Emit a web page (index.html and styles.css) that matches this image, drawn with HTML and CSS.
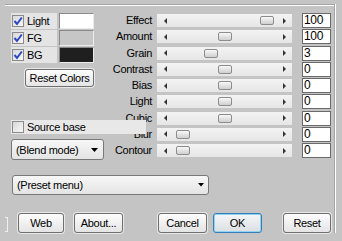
FILE: index.html
```html
<!DOCTYPE html>
<html lang="en">
<head>
    <meta charset="UTF-8">
    <title>Filter Settings</title>
    <link rel="stylesheet" href="styles.css">
</head>
<body>
    <div class="panel">
        <div class="main">
            <div class="left">
                <div class="color-row">
                    <label class="check-band"><span class="check"><svg width="10" height="10" viewBox="0 0 10 10"><path d="M1.5 5 L4 8 L8.8 1.5" fill="none" stroke="#2c47c4" stroke-width="2"/></svg></span>Light</label>
                    <span class="swatch swatch-light"></span>
                </div>
                <div class="color-row">
                    <label class="check-band"><span class="check"><svg width="10" height="10" viewBox="0 0 10 10"><path d="M1.5 5 L4 8 L8.8 1.5" fill="none" stroke="#2c47c4" stroke-width="2"/></svg></span>FG</label>
                    <span class="swatch swatch-fg"></span>
                </div>
                <div class="color-row">
                    <label class="check-band"><span class="check"><svg width="10" height="10" viewBox="0 0 10 10"><path d="M1.5 5 L4 8 L8.8 1.5" fill="none" stroke="#2c47c4" stroke-width="2"/></svg></span>BG</label>
                    <span class="swatch swatch-bg"></span>
                </div>
                <button class="btn btn-reset-colors">Reset Colors</button>
                <label class="check-band source-base"><span class="check"></span>Source base</label>
                <div class="select blend">
                    <span>(Blend mode)</span>
                    <svg width="7" height="4"><polygon points="0,0 7,0 3.5,4" fill="#000"/></svg>
                </div>
            </div>

            <div class="params">
                <span class="param-label">Effect</span>
                <div class="slider"><span class="arr-l"></span><span class="thumb" style="left:103px"></span><span class="arr-r"></span></div>
                <span class="num">100</span>

                <span class="param-label">Amount</span>
                <div class="slider"><span class="arr-l"></span><span class="thumb" style="left:61px"></span><span class="arr-r"></span></div>
                <span class="num">100</span>

                <span class="param-label">Grain</span>
                <div class="slider"><span class="arr-l"></span><span class="thumb" style="left:47px"></span><span class="arr-r"></span></div>
                <span class="num">3</span>

                <span class="param-label">Contrast</span>
                <div class="slider"><span class="arr-l"></span><span class="thumb" style="left:61px"></span><span class="arr-r"></span></div>
                <span class="num">0</span>

                <span class="param-label">Bias</span>
                <div class="slider"><span class="arr-l"></span><span class="thumb" style="left:61px"></span><span class="arr-r"></span></div>
                <span class="num">0</span>

                <span class="param-label">Light</span>
                <div class="slider"><span class="arr-l"></span><span class="thumb" style="left:61px"></span><span class="arr-r"></span></div>
                <span class="num">0</span>

                <span class="param-label">Cubic</span>
                <div class="slider"><span class="arr-l"></span><span class="thumb" style="left:61px"></span><span class="arr-r"></span></div>
                <span class="num">0</span>

                <span class="param-label">Blur</span>
                <div class="slider"><span class="arr-l"></span><span class="thumb" style="left:19px"></span><span class="arr-r"></span></div>
                <span class="num">0</span>

                <span class="param-label">Contour</span>
                <div class="slider"><span class="arr-l"></span><span class="thumb" style="left:19px"></span><span class="arr-r"></span></div>
                <span class="num">0</span>
            </div>
        </div>

        <div class="select preset">
            <span>(Preset menu)</span>
            <svg width="6" height="4"><polygon points="0,0 6,0 3,3.5" fill="#000"/></svg>
        </div>

        <div class="buttons">
            <span class="bracket"></span>
            <button class="btn btn-web">Web</button>
            <button class="btn btn-about">About...</button>
            <button class="btn btn-cancel">Cancel</button>
            <button class="btn btn-ok">OK</button>
            <button class="btn btn-reset">Reset</button>
        </div>
    </div>
</body>
</html>
```

FILE: styles.css
```css
body {
    margin: 0;
    width: 342px;
    height: 241px;
    overflow: hidden;
    background-color: #c4c4c4;
    font-family: "Liberation Sans", Arial, sans-serif;
    font-size: 11px;
    letter-spacing: -0.3px;
    color: #000;
}

.panel {
    margin: 4px 0 0 5px;
    width: 329px;
    height: 228px;
    border-top: 1px solid #a4a4a4;
    border-right: 1px solid #a4a4a4;
    box-shadow: inset 0 1px #fff, 1px 0 #fff;
}

.main {
    display: flex;
    padding-top: 8px;
}

.left {
    margin-left: 6px;
    width: 93px;
    display: flex;
    flex-direction: column;
    align-items: flex-start;
}

.color-row {
    display: flex;
    height: 16px;
    margin-bottom: 1px;
}

.check-band {
    display: flex;
    align-items: center;
    gap: 3px;
    box-sizing: border-box;
    width: 46px;
    height: 16px;
    padding-left: 1px;
    background-color: #e4e4e4;
}

.check {
    display: flex;
    align-items: center;
    justify-content: center;
    box-sizing: border-box;
    width: 12px;
    height: 12px;
    border: 1px solid #8a8a8a;
    background: linear-gradient(135deg, #d8d8dc, #f8f8f8);
}

.swatch {
    box-sizing: border-box;
    width: 35px;
    height: 16px;
    margin-left: 2px;
    border: 1px solid;
    border-color: #8a8a8a #ececec #ececec #8a8a8a;
}

.swatch-light {
    background-color: #fff;
}

.swatch-fg {
    background-color: #c6c6c6;
}

.swatch-bg {
    background-color: #1f1f1f;
}

.btn {
    box-sizing: border-box;
    padding: 0;
    border: 1px solid #6f6f6f;
    border-radius: 3px;
    background: linear-gradient(#fdfdfd, #e4e4e4);
    box-shadow: 0 0 0 1px #e8e8e8;
    font: inherit;
    letter-spacing: inherit;
    color: #000;
    height: 20px;
}

.btn-reset-colors {
    margin: 5px 0 0 14px;
    width: 69px;
    height: 18px;
}

.source-base {
    position: relative;
    z-index: 1;
    width: 135px;
    height: 14px;
    margin-top: 33px;
    background-color: #e8e8e8;
}

.select {
    box-sizing: border-box;
    display: flex;
    align-items: center;
    justify-content: space-between;
    border: 1px solid #787878;
    border-radius: 3px;
    background: linear-gradient(#f7f7f7, #e4e4e4);
}

.blend {
    margin-top: 5px;
    width: 93px;
    height: 21px;
    padding: 0 5px 0 4px;
}

.params {
    margin-left: 4px;
    display: grid;
    grid-template-columns: 49px 145px 29px;
    grid-template-rows: repeat(9, 16.25px);
}

.param-label {
    padding-right: 5px;
    text-align: right;
    line-height: 15px;
}

.slider {
    position: relative;
    box-sizing: border-box;
    width: 135px;
    height: 13px;
    margin-top: 1px;
    padding: 0 6px 0 7px;
    display: flex;
    align-items: center;
    justify-content: space-between;
    background: linear-gradient(#f3f3f3, #e6e6e6);
}

.arr-l {
    width: 0;
    height: 0;
    border-top: 3px solid transparent;
    border-bottom: 3px solid transparent;
    border-right: 3px solid #333;
}

.arr-r {
    width: 0;
    height: 0;
    border-top: 3.5px solid transparent;
    border-bottom: 3.5px solid transparent;
    border-left: 3px solid #333;
}

.thumb {
    position: absolute;
    top: 2px;
    box-sizing: border-box;
    width: 14px;
    height: 9px;
    border: 1px solid #8c8c8c;
    border-radius: 2px;
    background: linear-gradient(#f8f8f8, #cfcfcf);
}

.num {
    box-sizing: border-box;
    height: 15px;
    padding-left: 1px;
    border: 1px solid #6a6a6a;
    background-color: #fff;
    line-height: 13px;
    font-size: 12px;
}

.preset {
    margin: 15px 0 0 7px;
    width: 197px;
    height: 20px;
    padding: 0 4px 0 4px;
}

.buttons {
    display: flex;
    margin-top: 18px;
    height: 20px;
}

.bracket {
    align-self: flex-end;
    width: 2px;
    height: 13px;
    margin-bottom: 1px;
    border: 1px solid #efefef;
    border-left: none;
}

.btn-web {
    margin-left: 10px;
    width: 46px;
}

.btn-about {
    margin-left: 10px;
    width: 49px;
}

.btn-cancel {
    margin-left: 35px;
    width: 49px;
}

.btn-ok {
    margin-left: 6px;
    width: 49px;
    border-color: #2f7fba;
    box-shadow: inset 0 0 0 1px #93d2f2;
    background: linear-gradient(#f4f6f8, #dcdfe2);
}

.btn-reset {
    margin-left: 21px;
    width: 48px;
}
```
